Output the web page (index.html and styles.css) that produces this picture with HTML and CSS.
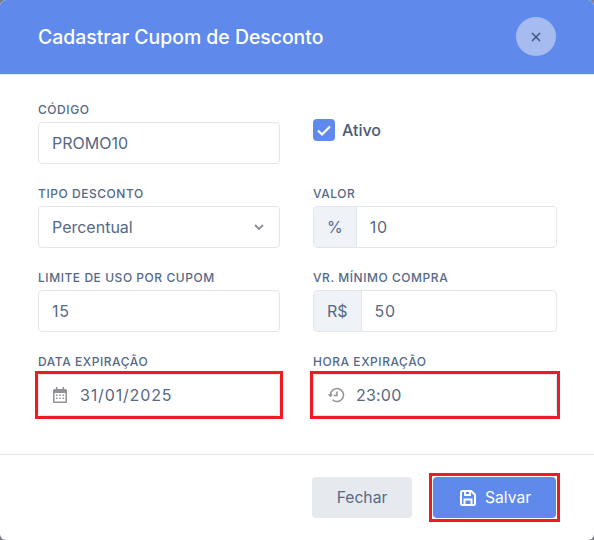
FILE: index.html
```html
<!DOCTYPE html>
<html lang="pt-BR">
<head>
<meta charset="utf-8">
<title>Cadastrar Cupom de Desconto</title>
<link rel="stylesheet" href="styles.css">
</head>
<body>
<div class="dialog">
  <header class="head">
    <h1 class="title">Cadastrar Cupom de Desconto</h1>
    <button class="close" type="button" aria-label="Fechar">
      <svg viewBox="0 0 10 10" width="10" height="10"><path d="M1 1l8 8M9 1l-8 8" stroke="#3d4f73" stroke-width="1.4" fill="none"/></svg>
    </button>
  </header>
  <main class="form">
    <div class="field">
      <label class="label">CÓDIGO</label>
      <div class="box"><span class="val">PROMO10</span></div>
    </div>
    <div class="check-field">
      <span class="check"><svg viewBox="0 0 22 22" width="22" height="22"><path d="M5 11.5l4 4 8-8" stroke="#fff" stroke-width="2.2" fill="none"/></svg></span>
      <span class="check-label">Ativo</span>
    </div>
    <div class="field">
      <label class="label">TIPO DESCONTO</label>
      <div class="box select"><span class="val">Percentual</span>
        <svg viewBox="0 0 10 6" width="10" height="6"><path d="M1 1l4 4 4-4" stroke="#8a8f98" stroke-width="1.8" fill="none"/></svg>
      </div>
    </div>
    <div class="field">
      <label class="label">VALOR</label>
      <div class="box group"><span class="addon">%</span><span class="val num">10</span></div>
    </div>
    <div class="field">
      <label class="label">LIMITE DE USO POR CUPOM</label>
      <div class="box"><span class="val num">15</span></div>
    </div>
    <div class="field">
      <label class="label">VR. MÍNIMO COMPRA</label>
      <div class="box group"><span class="addon">R$</span><span class="val num">50</span></div>
    </div>
    <div class="field">
      <label class="label">DATA EXPIRAÇÃO</label>
      <div class="mark">
        <div class="box icon-box">
          <svg viewBox="0 0 16 16" width="16" height="16"><path fill="#8f9297" d="M4 0h1.5v2h5V0H12v2h1.5A1.5 1.5 0 0 1 15 3.500v11a1.500 1.500 0 0 1-1.500 1.500h-11A1.500 1.500 0 0 1 1 14.500v-11A1.500 1.500 0 0 1 2.500 2H4zM2.500 6v8.500h11V6z"/><path fill="#8f9297" d="M4 7.500h1.500V9H4zM7.200 7.500h1.500V9H7.200zM10.500 7.500H12V9h-1.500zM4 10.500h1.500V12H4zM7.200 10.500h1.500V12H7.200zM10.500 10.500H12V12h-1.500z"/></svg>
          <span class="val date">31/01/2025</span>
        </div>
      </div>
    </div>
    <div class="field">
      <label class="label">HORA EXPIRAÇÃO</label>
      <div class="mark">
        <div class="box icon-box">
          <svg viewBox="0 0 18 16" width="18" height="16"><path d="M3.500 8a6.500 6.500 0 1 1 2 4.700" stroke="#8f9297" stroke-width="1.500" fill="none"/><path d="M0.800 7.200h5.200L3.400 10.200z" fill="#8f9297"/><path d="M10 4.500V8.500H6.800" stroke="#8f9297" stroke-width="1.500" fill="none"/></svg>
          <span class="val time">23:00</span>
        </div>
      </div>
    </div>
  </main>
  <footer class="foot">
    <button class="btn ghost" type="button">Fechar</button>
    <span class="btn-mark">
      <button class="btn primary" type="button">
        <svg viewBox="0 0 16 16" width="16" height="16" fill="none" stroke="#fff" stroke-width="2"><path d="M2.500 1h8.800L15 4.700v8.800a1.500 1.500 0 0 1-1.500 1.500h-11A1.500 1.500 0 0 1 1 13.500v-11A1.500 1.500 0 0 1 2.500 1z"/><path d="M5 1v4h5V1"/><path d="M4.500 15V9.500h7V15"/></svg>
        Salvar
      </button>
    </span>
  </footer>
</div>
</body>
</html>
```
FILE: styles.css
```css
* { box-sizing: border-box; }
html, body { margin: 0; height: 100%; }
body {
  background: #7c7f86;
  font-family: "Inter", "Liberation Sans", sans-serif;
  overflow: hidden;
}
.dialog {
  width: 594px;
  height: 540px;
  background: #fff;
  border-radius: 6px;
  overflow: hidden;
  display: flex;
  flex-direction: column;
}
.head {
  height: 75px;
  flex: none;
  background: #5f8aeb;
  border-bottom: 1px solid #e4e6ea;
  display: flex;
  align-items: center;
  justify-content: space-between;
  padding: 0 38px 1px 38px;
}
.title {
  margin: 0;
  font-size: 19.400px;
  font-weight: 500;
  color: #fff;
}
.close {
  width: 40px;
  height: 39px;
  border: 0;
  padding: 0;
  border-radius: 50%;
  background: #a6bcf0;
  display: flex;
  align-items: center;
  justify-content: center;
}
.form {
  flex: none;
  height: 379px;
  padding: 26px 37px 0 38px;
  display: grid;
  grid-template-columns: 242px 244px;
  column-gap: 33px;
  grid-auto-rows: 63px;
  row-gap: 21px;
}
.field { display: flex; flex-direction: column; }
.label {
  height: 21px;
  font-size: 12px;
  font-weight: 500;
  line-height: 18px;
  letter-spacing: 0.550px;
  color: #566885;
}
.box {
  height: 42px;
  border: 1px solid #e2e5ea;
  border-radius: 4px;
  background: #fff;
  display: flex;
  align-items: center;
  padding: 0 13px;
  color: #566885;
  font-size: 16px;
}
.val { color: #566885; }
.num { letter-spacing: 0.800px; }
.date { letter-spacing: 0.850px; }
.time { letter-spacing: 0.200px; margin-left: -1px; }
.select { justify-content: space-between; padding-right: 15px; }
.group { padding: 0; overflow: hidden; }
.addon {
  height: 100%;
  padding: 0 13px;
  background: #eff3f7;
  border-right: 1px solid #e2e5ea;
  display: flex;
  align-items: center;
  margin-right: 13px;
}
.icon-box { gap: 12px; }
.mark {
  margin: -3px;
  border: 3px solid #ed1c24;
}
.check-field {
  display: flex;
  align-items: center;
  gap: 7px;
  padding-top: 4px;
  height: 54px;
}
.check {
  width: 22px;
  height: 22px;
  border-radius: 4px;
  background: #5f8aeb;
  display: flex;
}
.check-label {
  font-size: 16px;
  font-weight: 500;
  color: #4a5b78;
}
.foot {
  flex: 1;
  border-top: 1px solid #e4e6ea;
  display: flex;
  justify-content: flex-end;
  align-items: flex-start;
  gap: 21px;
  padding: 22px 38px 0 0;
}
.btn {
  height: 41px;
  border: 0;
  border-radius: 4px;
  font-family: inherit;
  font-size: 15.700px;
  font-weight: 400;
  display: flex;
  align-items: center;
  justify-content: center;
  gap: 9px;
}
.ghost { width: 100px; background: #e6e9ee; color: #566885; }
.btn-mark {
  margin: -4px;
  padding: 1px;
  border: 3px solid #ed1c24;
  display: block;
}
.primary {
  width: 123px;
  background: #5f8aeb;
  color: #fff;
  padding: 0 0 0 2px;
}
```
